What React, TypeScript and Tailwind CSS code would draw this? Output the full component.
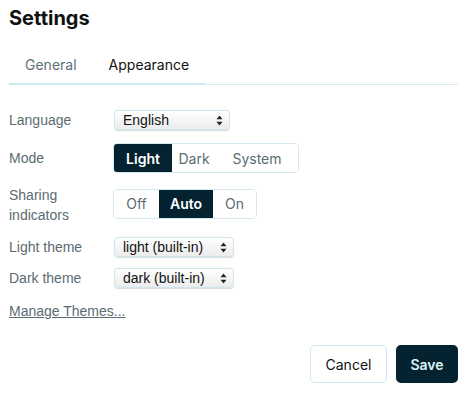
import { useState } from 'react'

const labelFont = "font-['Liberation_Sans','Helvetica',sans-serif]"

function Chevrons() {
  return (
    <svg width="7" height="11" viewBox="0 0 7 11" className="shrink-0">
      <path d="M3.5 0.5 L6.5 4.2 L0.5 4.2 Z" fill="#222" />
      <path d="M3.5 10.5 L6.5 6.8 L0.5 6.8 Z" fill="#222" />
    </svg>
  )
}

function NativeSelect({ value, width }: { value: string; width: string }) {
  return (
    <div
      className={`${width} h-[20px] flex items-center justify-between pl-[8px] pr-[6px] rounded-[4px] border border-[#cfe6ee] bg-gradient-to-b from-white to-[#ececec] shadow-[0_0.5px_1px_rgba(0,0,0,0.15)] text-[14px] text-[#111] ${labelFont}`}
    >
      <span>{value}</span>
      <Chevrons />
    </div>
  )
}

function Segmented({ options, active, widths }: { options: string[]; active: string; widths: string[] }) {
  return (
    <div className="flex h-[30px] rounded-[4px] border border-[#d3e8ef] overflow-hidden font-['Inter',sans-serif] text-[14px]">
      {options.map((opt, i) => (
        <div
          key={opt}
          className={
            `${widths[i]} flex items-center justify-center ` +
            (opt === active ? 'bg-[#04222f] text-white font-semibold' : 'bg-white text-[#5b6b72]')
          }
        >
          {opt}
        </div>
      ))}
    </div>
  )
}

export default function App() {
  const [tab] = useState('appearance')

  return (
    <div className="w-[470px] h-[400px] bg-white pl-[9px] pr-[12px] flex flex-col">
      {/* Title */}
      <h1 className="text-[20px] font-bold text-[#111] leading-none pt-[8px] font-['Inter',sans-serif]">
        Settings
      </h1>

      {/* Tabs */}
      <div className="flex items-end mt-[26px] border-b border-[#d3ebf2]">
        <div className="flex border-b-2 border-[#cde9f2] -mb-[1px] font-['Inter',sans-serif] text-[14px]">
          <div className={`pl-[16px] pr-[16px] pb-[8px] ${tab === 'general' ? 'text-[#111]' : 'text-[#5e7178]'}`}>General</div>
          <div className={`pl-[16px] pr-[16px] pb-[8px] ${tab === 'appearance' ? 'text-[#111]' : 'text-[#5e7178]'}`}>Appearance</div>
        </div>
      </div>

      {/* Form */}
      <div className={`flex flex-col mt-[24px] text-[14px] text-[#5b6b72] ${labelFont}`}>
        <div className="flex items-center h-[22px]">
          <div className="w-[105px]">Language</div>
          <NativeSelect value="English" width="w-[116px]" />
        </div>

        <div className="flex items-center mt-[12px]">
          <div className="w-[104px]">Mode</div>
          <Segmented options={['Light', 'Dark', 'System']} active="Light" widths={['w-[58px]', 'w-[44px]', 'w-[82px]']} />
        </div>

        <div className="flex items-center mt-[12px]">
          <div className="w-[104px] leading-[20px]">
            Sharing
            <br />
            indicators
          </div>
          <div className="-mt-[3px]">
            <Segmented options={['Off', 'Auto', 'On']} active="Auto" widths={['w-[45px]', 'w-[54px]', 'w-[43px]']} />
          </div>
        </div>

        <div className="flex items-center mt-[11px] h-[22px]">
          <div className="w-[105px]">Light theme</div>
          <NativeSelect value="light (built-in)" width="w-[120px]" />
        </div>

        <div className="flex items-center mt-[9px] h-[22px]">
          <div className="w-[105px]">Dark theme</div>
          <NativeSelect value="dark (built-in)" width="w-[120px]" />
        </div>

        <a href="#" className="mt-[12px] underline text-[#5b6b72] w-fit">
          Manage Themes...
        </a>
      </div>

      {/* Actions */}
      <div className="flex justify-end gap-[9px] mt-[23px] font-['Inter',sans-serif] text-[14px]">
        <button className="w-[77px] h-[38px] rounded-[5px] border border-[#cfe8ef] bg-white text-[#111]">Cancel</button>
        <button className="w-[62px] h-[38px] rounded-[5px] bg-[#04222f] text-[#dff3f8] font-semibold">Save</button>
      </div>
    </div>
  )
}
